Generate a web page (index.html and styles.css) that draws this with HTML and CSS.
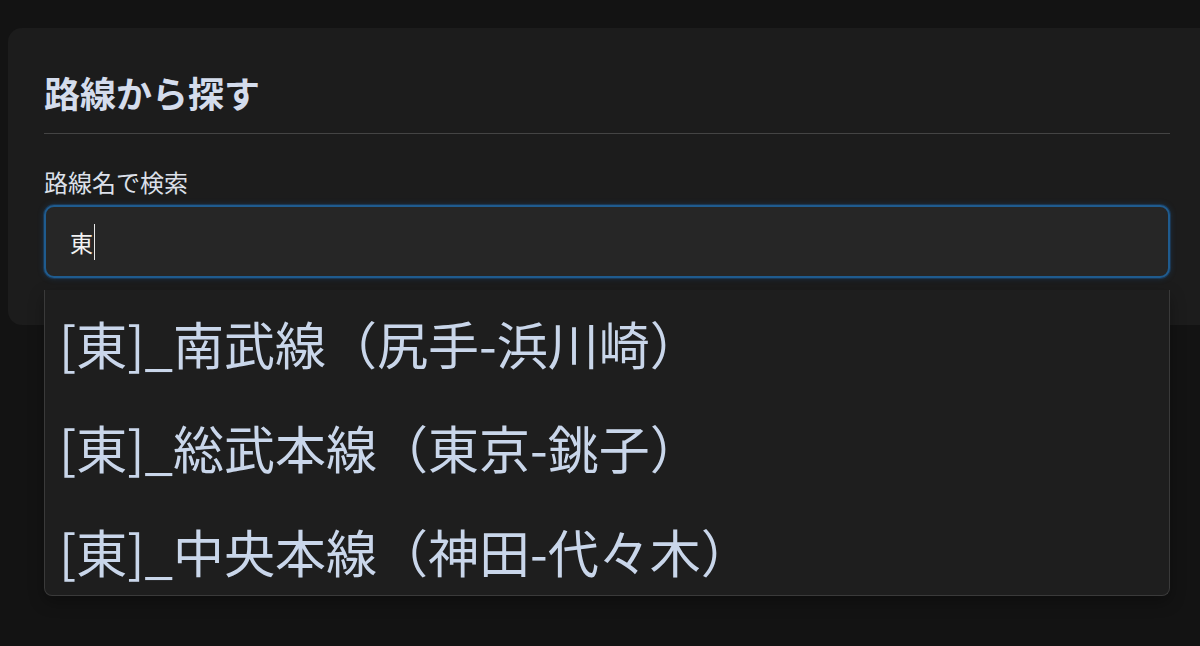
FILE: index.html
```html
<html>
    <head>
        <title>路線から探す</title>
        <link rel="stylesheet" href="styles.css">
    </head>
    <body>
        <div class="card">
            <h2 class="card-title">路線から探す</h2>
            <div class="divider"></div>
            <label class="field-label">路線名で検索</label>
            <div class="search">
                <div class="search-input">東<span class="caret"></span></div>
                <ul class="suggestions">
                    <li class="suggestion">[東]_南武線（尻手-浜川崎）</li>
                    <li class="suggestion">[東]_総武本線（東京-銚子）</li>
                    <li class="suggestion">[東]_中央本線（神田-代々木）</li>
                </ul>
            </div>
        </div>
    </body>
</html>
```

FILE: styles.css
```css
* {
    margin: 0;
    padding: 0;
    box-sizing: border-box;
}

body {
    background-color: #131313;
    font-family: "Noto Sans CJK JP", "Noto Sans", sans-serif;
    overflow: hidden;
    height: 646px;
}

.card {
    margin: 28px -16px 0 8px;
    padding: 42px 46px 47px 36px;
    background-color: #1c1c1c;
    border-radius: 14px;
}

.card-title {
    font-size: 36px;
    line-height: 44px;
    font-weight: 700;
    color: #d4dcec;
}

.divider {
    margin-top: 19px;
    height: 1px;
    background-color: #444444;
}

.field-label {
    display: block;
    margin-top: 33px;
    font-size: 24px;
    line-height: 30px;
    color: #dce0ea;
}

.search {
    position: relative;
    margin-top: 8px;
}

.search-input {
    display: flex;
    align-items: center;
    height: 73px;
    padding-left: 24px;
    background-color: #262626;
    border: 2px solid #1f5b8e;
    border-radius: 10px;
    box-shadow: 0 0 0 1px rgba(30, 90, 150, 0.35), 0 0 6px rgba(30, 100, 170, 0.35);
    font-size: 23px;
    color: #f2f2f2;
}

.caret {
    display: inline-block;
    width: 1px;
    height: 36px;
    margin-left: 1px;
    background-color: #e8e8e8;
}

.suggestions {
    position: absolute;
    top: 85px;
    left: 0;
    right: 0;
    height: 306px;
    overflow: hidden;
    list-style: none;
    padding-top: 1px;
    background-color: #1e1e1e;
    border: 1px solid #3a3a3a;
    border-top: none;
    border-radius: 0 0 8px 8px;
    box-shadow: 0 6px 16px rgba(0, 0, 0, 0.3);
}

.suggestion {
    height: 104px;
    line-height: 104px;
    padding-left: 14px;
    font-size: 51px;
    color: #c9d6ea;
    white-space: nowrap;
}
```
